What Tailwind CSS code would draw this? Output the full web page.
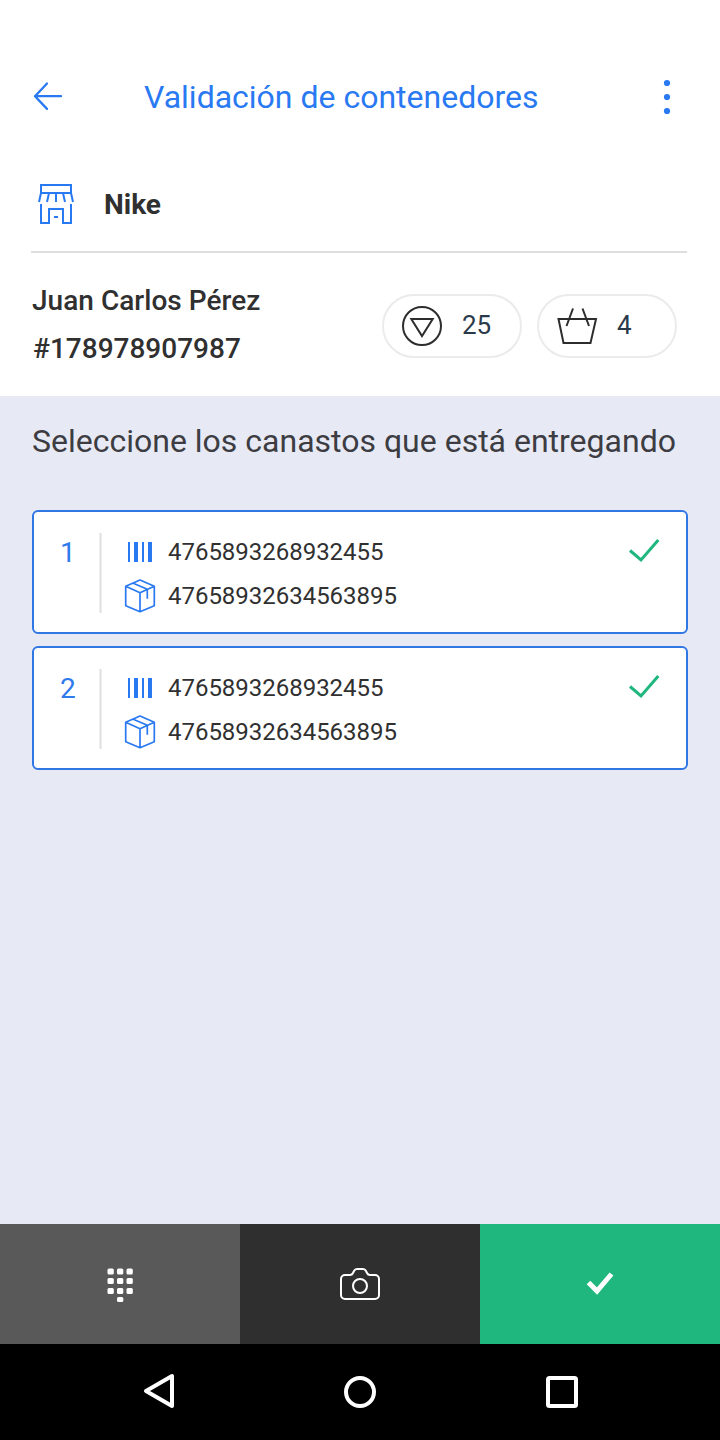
<!DOCTYPE html>
<html lang="es">
  <head>
    <meta charset="UTF-8" />
    <meta name="viewport" content="width=device-width, initial-scale=1.0" />
    <title>Validación de contenedores</title>
    <script src="https://cdn.jsdelivr.net/npm/@tailwindcss/browser@4"></script>
  </head>
  <body class="bg-[#e7eaf5] text-[#303030] font-[Roboto,sans-serif]">
    <div class="flex flex-col w-[720px] h-[1440px] overflow-hidden">
      <div class="bg-white h-[396px] shrink-0">
        <header class="flex items-center h-[146px] pt-12 pl-8 pr-[47px] text-[#2979f2]">
          <svg class="w-8 h-8" viewBox="0 0 32 32" fill="none" stroke="currentColor" stroke-width="2.3" stroke-linecap="round" stroke-linejoin="round">
            <path d="M15 2.5L3 15.2l12 12.7M3 15.2h26" />
          </svg>
          <h1 class="ml-20 text-[32px] leading-10 whitespace-nowrap">Validación de contenedores</h1>
          <svg class="w-3 h-10 ml-auto" viewBox="0 0 12 40" fill="currentColor">
            <circle cx="6" cy="6" r="3.1" />
            <circle cx="6" cy="20" r="3.1" />
            <circle cx="6" cy="34" r="3.1" />
          </svg>
        </header>

        <div class="flex items-start h-[107px] pt-[34px] ml-[31px] mr-[33px] border-b-2 border-[#dedede]">
          <svg class="w-10 h-12 ml-[5px]" viewBox="0 0 40 48" fill="none" stroke="#2979f2" stroke-width="2">
            <path d="M5 13V5h30v8H5L3 22M35 13l2 9M13 13l-2 9M20 13v9M27 13l2 9" />
            <path d="M5 24v19h8V29h14v14h8V24M18 37h4" />
          </svg>
          <h2 class="mt-[9px] ml-7 text-[28px] leading-8 font-bold">Nike</h2>
        </div>

        <div class="flex items-start pl-8 pr-[43px] pt-[23px]">
          <div class="pt-px text-[28px] leading-[48px] font-medium whitespace-nowrap">
            <p class="tracking-[0.03px]">Juan Carlos Pérez</p>
            <p class="pl-px">#178978907987</p>
          </div>
          <div class="flex gap-[15px] ml-auto mt-[18px] text-[26px] text-[#2b3a4a]">
            <div class="flex items-center w-[140px] h-16 pl-[17px] border-2 border-[#ebebeb] rounded-full">
              <svg class="w-[42px] h-[42px]" viewBox="0 0 42 42" fill="none" stroke="#2d2d2d" stroke-width="2">
                <circle cx="21" cy="21" r="19" />
                <path d="M10.3 14h21.4L21 31z" />
              </svg>
              <span class="ml-[19px] pb-0.5">25</span>
            </div>
            <div class="flex items-center w-[140px] h-16 pl-[17px] border-2 border-[#ebebeb] rounded-full">
              <svg class="w-[42px] h-[42px]" viewBox="0 0 42 42" fill="none" stroke="#2d2d2d" stroke-width="2">
                <path d="M2.5 14H40l-5.500 24h-27zM17 3.500L10.500 21M26.500 3.500L33 21" />
              </svg>
              <span class="ml-[19px] pb-0.5">4</span>
            </div>
          </div>
        </div>
      </div>

      <main class="grow px-8 pt-[25px]">
        <h3 class="text-[32px] leading-10 text-[#3c3c42] whitespace-nowrap">Seleccione los canastos que está entregando</h3>
        <div class="flex flex-col gap-3 mt-[49px]" id="baskets"></div>
      </main>

      <div class="grid grid-cols-3 h-[120px] shrink-0 text-white">
        <button class="flex items-center justify-center bg-[#595959]">
          <svg class="w-10 h-10" viewBox="0 0 40 40" fill="currentColor">
            <rect x="7.5" y="4.5" width="6.3" height="6" rx="1.5" />
            <rect x="17" y="4.5" width="6.3" height="6" rx="1.5" />
            <rect x="26.5" y="4.5" width="6.3" height="6" rx="1.5" />
            <rect x="7.5" y="14" width="6.3" height="6" rx="1.5" />
            <rect x="17" y="14" width="6.3" height="6" rx="1.5" />
            <rect x="26.5" y="14" width="6.3" height="6" rx="1.5" />
            <rect x="7.5" y="24" width="6.3" height="6" rx="1.5" />
            <rect x="17" y="24" width="6.3" height="6" rx="1.5" />
            <rect x="26.5" y="24" width="6.3" height="6" rx="1.5" />
            <rect x="17" y="33" width="6.3" height="5" rx="1.5" />
          </svg>
        </button>
        <button class="flex items-center justify-center bg-[#2f2f2f]">
          <svg class="w-10 h-10" viewBox="0 0 40 40" fill="none" stroke="currentColor" stroke-width="2" stroke-linejoin="round">
            <path d="M5 11h5q2 0 3-2l1-2q1-2 3-2h6q2 0 3 2l1 2q1 2 3 2h5a4 4 0 014 4v16a4 4 0 01-4 4H5a4 4 0 01-4-4V15a4 4 0 014-4z" />
            <circle cx="20" cy="22" r="7" />
          </svg>
        </button>
        <button class="flex items-center justify-center bg-[#1fb77d]">
          <svg class="w-10 h-10" viewBox="0 0 40 40" fill="none" stroke="currentColor" stroke-width="5">
            <path d="M8.5 18.5L17 27l14.500-17" />
          </svg>
        </button>
      </div>

      <nav class="flex items-center justify-between h-24 shrink-0 px-[139px] bg-black text-white">
        <svg class="w-10 h-10" viewBox="0 0 40 40" fill="none" stroke="currentColor" stroke-width="4" stroke-linejoin="round">
          <path d="M33 4v30L7 19z" />
        </svg>
        <svg class="w-10 h-10 -ml-0.5" viewBox="0 0 40 40" fill="none" stroke="currentColor" stroke-width="4">
          <circle cx="20" cy="20" r="14" />
        </svg>
        <svg class="w-10 h-10 -mr-px" viewBox="0 0 40 40" fill="none" stroke="currentColor" stroke-width="4" stroke-linejoin="round">
          <rect x="6" y="6" width="28" height="28" rx="1.5" />
        </svg>
      </nav>
    </div>

    <script>
      const baskets = [
        { barcode: "4765893268932455", box: "47658932634563895" },
        { barcode: "4765893268932455", box: "47658932634563895" },
      ];

      document.getElementById("baskets").innerHTML = baskets
        .map(
          (basket, i) => `
          <div class="flex h-[124px] bg-white border-2 border-[#2f78e4] rounded-md">
            <span class="w-[65px] pt-[21px] pl-[26px] text-[28px] leading-10 text-[#2f7aec]">${i + 1}</span>
            <svg class="w-1 h-20 mt-[20.5px]" viewBox="0 0 4 80" fill="#dfdfdf">
              <rect x="0.5" width="2" height="80" />
            </svg>
            <div class="pt-[18px] pl-[21px] text-2xl">
              <div class="flex items-center h-11">
                <svg class="w-8 h-9" viewBox="0 0 32 36" fill="#2979f2">
                  <path d="M4 8h2v20H4zM10 8h4v20h-4zM18 8h2v20h-2zM24 8h4v20h-4z" />
                </svg>
                <span class="ml-3 tracking-[-0.02px]">${basket.barcode}</span>
              </div>
              <div class="flex items-center h-11">
                <svg class="w-8 h-9" viewBox="0 0 32 36" fill="none" stroke="#2979f2" stroke-width="1.7" stroke-linejoin="round">
                  <path d="M16 2l14.3 6.3v19.4L16 33.7 1.7 27.7V8.3zM1.7 8.3L16 14.7l14.3-6.4M16 14.7v19M8.7 5l14.6 6.3v9.4" />
                </svg>
                <span class="ml-3 tracking-[-0.02px]">${basket.box}</span>
              </div>
            </div>
            <svg class="w-8 h-8 ml-auto mr-[26px] mt-[22px]" viewBox="0 0 32 32" fill="none" stroke="#1fb77d" stroke-width="3">
              <path d="M2 16.500l11 9.500L30.300 6" />
            </svg>
          </div>
        `
        )
        .join("");
    </script>
  </body>
</html>
